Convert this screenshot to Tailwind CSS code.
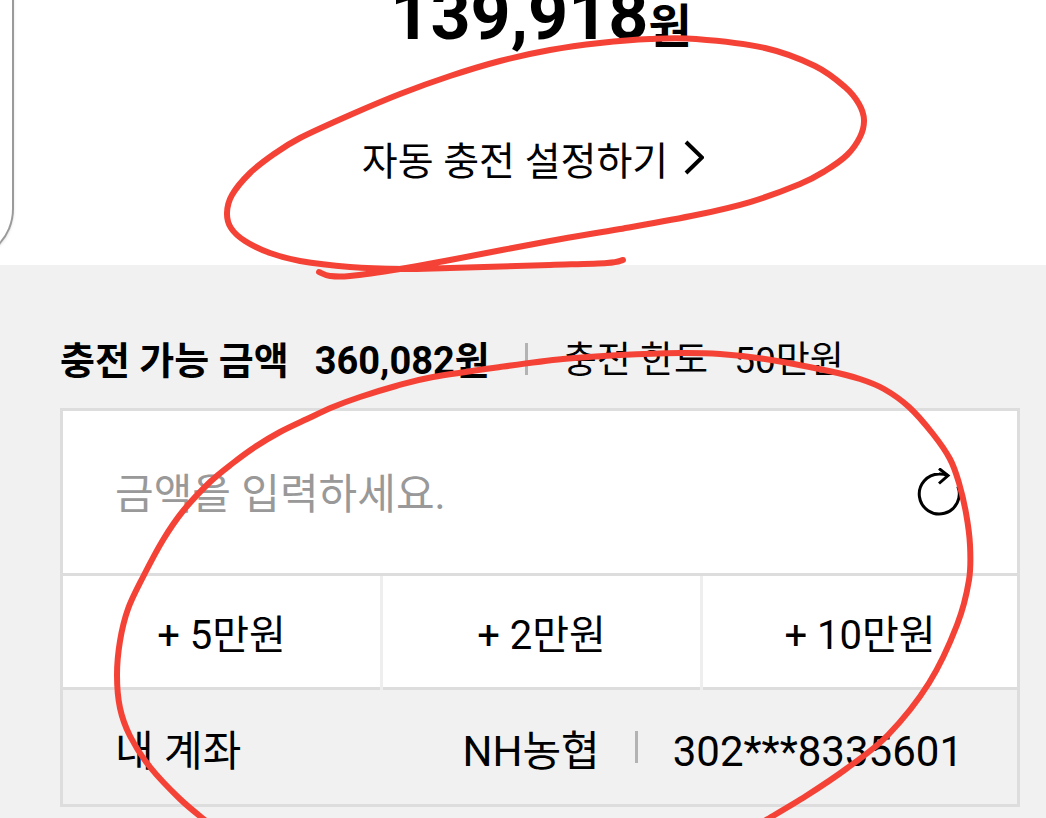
<!DOCTYPE html>
<html lang="ko">
  <head>
    <meta charset="UTF-8" />
    <meta name="viewport" content="width=device-width, initial-scale=1.0" />
    <title>자동 충전</title>
    <script src="https://cdn.jsdelivr.net/npm/@tailwindcss/browser@4"></script>
  </head>
  <body class="relative min-h-screen overflow-hidden bg-[#f1f1f1] font-['Roboto','Noto_Sans_CJK_KR',sans-serif] text-black">
    <!-- Balance -->
    <header class="relative -mt-6 overflow-hidden bg-white pb-[73px]">
      <div class="absolute -left-32 top-0 h-[285px] w-[142px] rounded-br-[52px] border-b-2 border-r-2 border-[#9a9a9a] shadow"></div>
      <p class="flex h-[68px] items-end justify-center pl-9 font-bold">
        <span class="text-[70px] leading-[58px]">139,918</span><span class="text-[47px] leading-[34px]">원</span>
      </p>
      <a href="#" class="mt-[88px] flex items-center justify-center gap-4 pl-5 text-[39px] leading-[60px]">
        자동 충전 설정하기
        <svg class="mb-2 h-9 w-5" viewBox="0 0 20 36" fill="none" stroke="currentColor" stroke-width="4" aria-hidden="true">
          <path d="M2 2L18 17.500L2 33" />
        </svg>
      </a>
    </header>

    <!-- Charge form -->
    <main class="pl-[60px] pr-[26px] pt-[66px]">
      <div class="flex items-center leading-[60px]">
        <p class="flex gap-[26px] text-[38px] font-bold">
          <span>충전 가능 금액</span>
          <span>360,082원</span>
        </p>
        <span class="mx-[35px] mb-1 h-8 w-[3px] bg-[#b3b3b3]"></span>
        <p class="flex gap-[26px] text-[37px]">
          <span>충전 한도</span>
          <span>50만원</span>
        </p>
      </div>

      <form class="mt-[17px] border-[3px] border-[#ddd]">
        <div class="flex h-[165px] items-center border-b-[3px] border-[#ddd] bg-white pl-[52px] pr-[54px]">
          <input type="text" aria-label="충전 금액" placeholder="금액을 입력하세요." class="h-20 min-w-0 flex-1 bg-transparent pt-1 text-[42px] outline-none placeholder:text-[#999]" />
          <button type="reset" aria-label="초기화">
            <svg class="h-12 w-12" viewBox="0 0 48 48" fill="none" stroke="currentColor" stroke-width="3">
              <path d="M42.800 18.500A20 20 0 1 1 24 6Q28 5.800 33 7.500" />
              <path d="M24 .5L33 7.500L24 15.500" />
            </svg>
          </button>
        </div>
        <div class="grid grid-cols-[317fr_317fr_314fr] gap-[3px] bg-[#eee] text-[40px]">
          <button type="button" class="h-[114px] border-b-[3px] border-[#ddd] bg-white pt-2">+ 5만원</button>
          <button type="button" class="h-[114px] border-b-[3px] border-[#ddd] bg-white pt-2">+ 2만원</button>
          <button type="button" class="h-[114px] border-b-[3px] border-[#ddd] bg-white pt-2">+ 10만원</button>
        </div>
        <div class="flex h-[114px] items-center justify-between pl-[52px] pr-[54px] pt-2 text-[42px]">
          <span>내 계좌</span>
          <span class="flex items-center">
            NH농협
            <span class="mx-[35px] mb-2 h-8 w-[3px] bg-[#b3b3b3]"></span>
            302***8335601
          </span>
        </div>
      </form>
    </main>

    <!-- Pen marks -->
    <svg class="pointer-events-none absolute left-0 top-0 h-[818px] w-[1046px]" viewBox="0 0 1046 818" fill="none" stroke="#f44336" stroke-width="6" stroke-linecap="round" stroke-linejoin="round" aria-hidden="true">
      <path id="upperMark" />
      <path id="lowerMark" />
    </svg>

    <script>
      const upperPoints = [
        [623, 260], [607, 263], [550, 265], [450, 268], [400, 269], [350, 267], [300, 261], [270, 253],
        [245, 241], [231, 228], [227, 213], [232, 195], [250, 173], [274, 154], [300, 138], [350, 115],
        [400, 94], [450, 76], [500, 61], [550, 50], [600, 43], [650, 39], [696, 39], [765, 48],
        [815, 66], [845, 87], [859, 104], [864, 120], [860, 137], [847, 155], [825, 171], [800, 184],
        [750, 202], [696, 215], [620, 229], [550, 241], [450, 260], [400, 269], [350, 276], [330, 276],
        [319, 272],
      ];
      const lowerPoints = [
        [206, 821], [180, 799], [150, 767], [130, 736], [120, 708], [117, 675], [120, 641], [128, 609],
        [143, 577], [163, 540], [183, 511], [210, 482], [233, 463], [255, 447], [280, 432], [307, 419],
        [333, 407], [360, 397], [396, 386], [433, 377], [500, 367], [563, 359], [620, 355], [680, 353],
        [720, 354], [765, 359], [829, 371], [860, 379], [884, 389], [909, 407], [933, 434], [950, 459],
        [959, 483], [966, 513], [970, 545], [969, 580], [957, 625], [929, 683], [888, 735], [846, 769],
        [806, 796], [766, 820],
      ];

      function smoothPath(points) {
        let d = `M${points[0].join(" ")}`;
        for (let i = 0; i < points.length - 1; i++) {
          const a = points[i - 1] || points[i];
          const b = points[i];
          const c = points[i + 1];
          const e = points[i + 2] || c;
          d += `C${b[0] + (c[0] - a[0]) / 6} ${b[1] + (c[1] - a[1]) / 6} ${c[0] - (e[0] - b[0]) / 6} ${c[1] - (e[1] - b[1]) / 6} ${c[0]} ${c[1]}`;
        }
        return d;
      }

      document.getElementById("upperMark").setAttribute("d", smoothPath(upperPoints));
      document.getElementById("lowerMark").setAttribute("d", smoothPath(lowerPoints));
    </script>
  </body>
</html>
